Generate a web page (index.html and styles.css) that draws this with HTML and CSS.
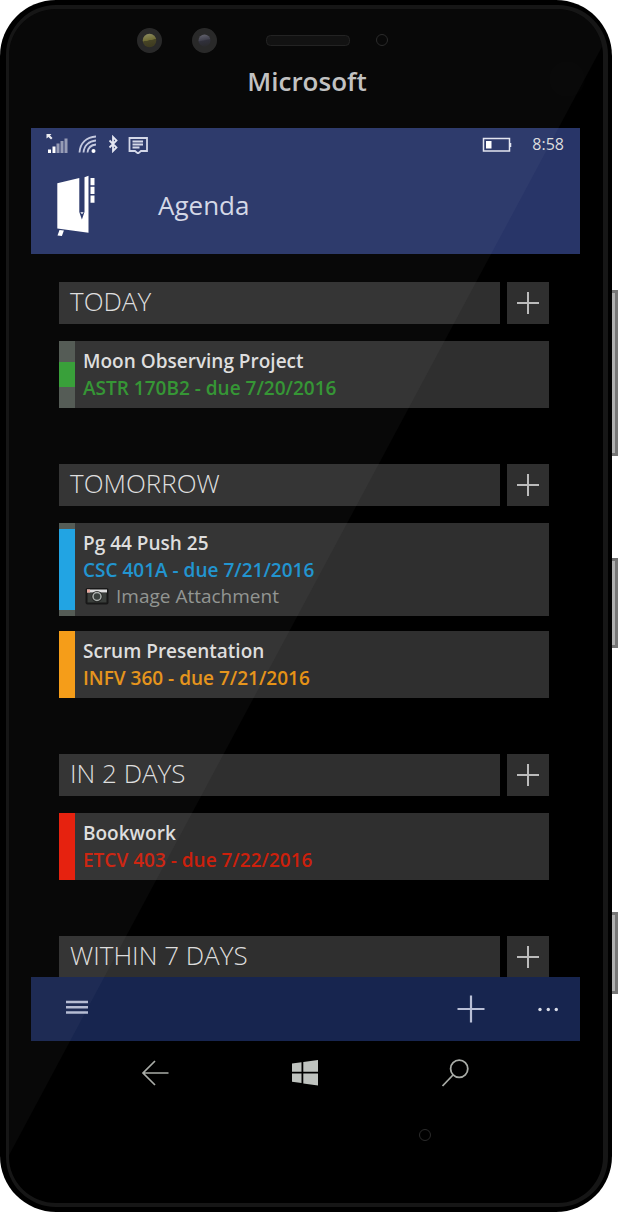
FILE: index.html
```html
<!DOCTYPE html>
<html lang="en">
<head>
<meta charset="utf-8">
<meta name="viewport" content="width=device-width, initial-scale=1">
<title>Agenda</title>
<link rel="stylesheet" href="styles.css">
</head>
<body>
<div class="device">
  <div class="phone">
    <div class="bezel">
      <div class="top">
        <svg class="sensors" width="254" height="28" viewBox="136 26 254 28" aria-hidden="true">
          <defs>
            <linearGradient id="flash" x1="0" y1="0" x2="0.2" y2="1"><stop offset="0" stop-color="#8b8a60"/><stop offset=".54" stop-color="#6a672e"/><stop offset=".58" stop-color="#413e1f"/><stop offset="1" stop-color="#393619"/></linearGradient>
            <linearGradient id="lens" x1="0" y1="0" x2="0.2" y2="1"><stop offset="0" stop-color="#62626c"/><stop offset=".5" stop-color="#3d3d4a"/><stop offset=".6" stop-color="#2a2a35"/><stop offset="1" stop-color="#252529"/></linearGradient>
          </defs>
          <circle cx="149.500" cy="40.500" r="12.500" fill="#232323"/>
          <circle cx="149.500" cy="40.500" r="6.800" fill="url(#flash)"/>
          <circle cx="204.500" cy="40.500" r="12.500" fill="#232323"/>
          <circle cx="204.500" cy="40.500" r="6" fill="url(#lens)"/>
          <rect x="266.500" y="35.500" width="83" height="10" rx="4" fill="#0b0b0b" stroke="#1c1c1c"/>
          <circle cx="382" cy="40" r="5.500" fill="#010101" stroke="#242424"/>
        </svg>
        <div class="brand">Microsoft</div>
      </div>
      <main class="screen">
        <header class="header">
          <div class="status">
            <svg width="22" height="20" viewBox="46 133 22 20" fill="#fff" aria-hidden="true">
              <path d="M46.500 133h5l-1.500 1.500 2.500 2.500-1.500 1.500-2.500-2.500-2 1.500z" opacity=".9"/>
              <path d="M48 148.500h3v3.500h-3zM52.500 145.500h3v6.500h-3z"/>
              <path d="M56.500 142.500h3v9.500h-3zM60.500 140h3v12h-3zM64.500 137.500h3V152h-3z" opacity=".5"/>
            </svg>
            <svg width="20" height="20" viewBox="79 133 20 20" fill="none" stroke="#c3c8de" stroke-width="1.800" aria-hidden="true">
              <path d="M80.500 151.500C81 142 87.500 136 97 135.500M84.500 151.500C85 144.500 90 140 97 139.500M88.500 151.500C89 147 92 144 97 143.500"/>
              <circle cx="94.500" cy="150" r="2" fill="#fff" stroke="none"/>
            </svg>
            <svg width="10" height="20" viewBox="108 133 10 20" fill="none" stroke="#e4e7f2" stroke-width="1.800" aria-hidden="true"><path d="M109.500 139.500l7 7-3.500 3.500V136l3.500 3.500-7 7"/></svg>
            <svg width="22" height="20" viewBox="128 133 22 20" fill="none" stroke="#d3d7e8" stroke-width="1.800" aria-hidden="true"><path d="M129.500 137h17.500V150h-6l-3 2.500-3-2.500h-5.500z"/><path d="M132.500 140.500h10.500M132.500 143.500h10.500M132.500 146.500h7"/></svg>
            <span class="spacer"></span>
            <svg width="30" height="20" viewBox="483 134 30 20" fill="none" stroke="#e2e5f0" stroke-width="1.500" aria-hidden="true"><path d="M484.500 138.500h26v12.500h-26zM511.500 143v4"/><path d="M487 141h5.500v7.500H487z" fill="#fff" stroke="none"/></svg>
            <time class="time">8:58</time>
          </div>
          <div class="title-row">
            <svg width="38" height="62" viewBox="57 175 38 62" fill="#fff" role="img" aria-label="Planner logo">
              <path d="M57.300 183.300l22-5.200V212l2.600 7.500 2.600-7.500V177.300l4-1.500v57l-31.200-4.400z"/>
              <path d="M80.300 212.200h3.400l-1.700 2z"/>
              <path d="M90.500 178h4v7.200h-4zM90.500 186.800h4v7.200h-4zM90.500 195.500h4v7.200h-4zM59.500 230l4.400.5-2 5.500-4.400-.6z"/>
            </svg>
            <h1 class="title">Agenda</h1>
          </div>
        </header>

        <div class="list">
          <section class="group">
            <div class="group-head"><h2 class="group-title">TODAY</h2><button class="add" aria-label="Add for today"><svg width="24" height="24" viewBox="0 0 24 24"><path d="M12 1v22M1 12h22"/></svg></button></div>
            <article class="card green"><div class="strip"><span class="mark third"></span></div><div class="info"><h3 class="name">Moon Observing Project</h3><p class="due">ASTR 170B2 - due 7/20/2016</p></div></article>
          </section>
          <section class="group">
            <div class="group-head"><h2 class="group-title">TOMORROW</h2><button class="add" aria-label="Add for tomorrow"><svg width="24" height="24" viewBox="0 0 24 24"><path d="M12 1v22M1 12h22"/></svg></button></div>
            <article class="card blue"><div class="strip"><span class="mark most"></span></div><div class="info"><h3 class="name">Pg 44 Push 25</h3><p class="due">CSC 401A - due 7/21/2016</p>
              <p class="attach"><svg width="24" height="18" viewBox="0 0 24 18" aria-hidden="true"><rect x=".5" y="1" width="23" height="16.500" rx="2" fill="#111"/><rect x="2.500" y="6" width="19" height="9.500" fill="#343835"/><path d="M2 2.500h20v3H2z" fill="#ddd"/><path d="M2 2.500h3v3H2z" fill="#e9a79c"/><circle cx="12" cy="9.500" r="5.500" fill="#1b1e1c"/><circle cx="12" cy="9.500" r="4" fill="#343a37" stroke="#a8aca9" stroke-width="1.500"/></svg>Image Attachment</p></div></article>
            <article class="card orange"><div class="strip"><span class="mark full"></span></div><div class="info"><h3 class="name">Scrum Presentation</h3><p class="due">INFV 360 - due 7/21/2016</p></div></article>
          </section>
          <section class="group">
            <div class="group-head"><h2 class="group-title">IN 2 DAYS</h2><button class="add" aria-label="Add in 2 days"><svg width="24" height="24" viewBox="0 0 24 24"><path d="M12 1v22M1 12h22"/></svg></button></div>
            <article class="card red"><div class="strip"><span class="mark full"></span></div><div class="info"><h3 class="name">Bookwork</h3><p class="due">ETCV 403 - due 7/22/2016</p></div></article>
          </section>
          <section class="group">
            <div class="group-head"><h2 class="group-title">WITHIN 7 DAYS</h2><button class="add" aria-label="Add within 7 days"><svg width="24" height="24" viewBox="0 0 24 24"><path d="M12 1v22M1 12h22"/></svg></button></div>
          </section>
        </div>

        <div class="appbar">
          <button class="tool" aria-label="Menu"><svg width="22" height="20" viewBox="0 0 22 20" stroke="#b4bad2" stroke-width="2.400"><path d="M0 3h22M0 8.300h22M0 13.500h22"/></svg></button>
          <span class="spacer"></span>
          <button class="tool" aria-label="Add"><svg width="28" height="28" viewBox="0 0 28 28" stroke="#b9bfd6" stroke-width="2.200"><path d="M14 .5v27M.5 14h27"/></svg></button>
          <button class="tool" aria-label="More"><svg width="22" height="6" viewBox="0 0 22 6" fill="#d9dce8"><circle cx="2" cy="3.500" r="1.700"/><circle cx="10.300" cy="3.500" r="1.700"/><circle cx="18.300" cy="3.500" r="1.700"/></svg></button>
        </div>
      </main>
      <nav class="keys" aria-label="System">
        <button class="tool" aria-label="Back"><svg width="28" height="28" viewBox="0 0 28 28" fill="none" stroke="#a9aca7" stroke-width="1.700"><path d="M27.500 14H2M14 2L2 14l12 12"/></svg></button>
        <button class="tool" aria-label="Start"><svg width="28" height="28" viewBox="0 0 28 28" fill="#bfc3bf"><path d="M1 4.500l9.500-1.300v9.600H1zM12.300 3L27 1v11.800H12.300zM1 14.600h9.500V24L1 22.700zM12.300 14.600H27v11.800l-14.700-2z"/></svg></button>
        <button class="tool" aria-label="Search"><svg width="28" height="28" viewBox="0 0 28 28" fill="none" stroke="#a9aca7" stroke-width="1.800"><circle cx="18.200" cy="9.800" r="8.600"/><path d="M12 16L1.500 27"/></svg></button>
      </nav>
      <svg class="mic" width="12" height="12" viewBox="0 0 12 12" aria-hidden="true"><circle cx="6" cy="6" r="5.500" fill="none" stroke="#2b2b2b"/></svg>
      <div class="gloss"></div>
      <div class="spot"></div>
    </div>
  </div>
  <div class="side">
    <span class="key volume"></span>
    <span class="key power"></span>
    <span class="key camera"></span>
  </div>
</div>
</body>
</html>
```
FILE: styles.css
```css
* { box-sizing: border-box; }
body {
  margin: 0;
  background: #fff;
  color: #ddd;
  font-family: "Open Sans", "Noto Sans", sans-serif;
}
h1, h2, h3, p { margin: 0; font-weight: 400; }
svg { display: block; flex: none; }
button { border: 0; padding: 0; cursor: pointer; }

.device { display: flex; height: 100vh; }
.phone {
  flex: 1;
  min-width: 0;
  padding: 5px 4px 5px 6px;
  border-radius: 56px;
  background: #000;
}
.bezel {
  position: relative;
  display: flex;
  flex-direction: column;
  height: 100%;
  overflow: hidden;
  border: 4px solid #161616;
  border-left-width: 3px;
  border-right-width: 5px;
  border-radius: 50px;
}
.top { flex: none; height: 119px; padding-top: 17px; }
.sensors { margin-left: 127px; }
.brand {
  margin-top: 10px;
  padding-left: 2px;
  text-align: center;
  font-size: 26px;
  line-height: 34px;
  font-weight: 600;
  color: #c0c0c0;
}

.screen {
  flex: 1;
  min-height: 0;
  display: flex;
  flex-direction: column;
  margin: 0 23px 0 22px;
}
.header { flex: none; height: 126px; background: #283568; }
.status {
  display: flex;
  align-items: center;
  gap: 10px;
  height: 32px;
  padding: 0 16px 0 15px;
}
.spacer { flex: 1; }
.time { margin-left: 10px; font-size: 16px; line-height: 24px; }
.title-row { display: flex; align-items: center; gap: 63px; padding: 15px 26px 0; }
.title { padding-bottom: 2px; font-size: 26px; line-height: 36px; color: #d3d7e6; }

.list {
  flex: 1;
  min-height: 0;
  overflow-y: auto;
  scrollbar-width: none;
  padding: 28px 31px 0 28px;
}
.group { display: flex; flex-direction: column; gap: 15px; margin-bottom: 56px; }
.group:last-child { margin-bottom: 0; }
.group-head { display: flex; gap: 7px; height: 42px; margin-bottom: 2px; }
.group-title {
  flex: 1;
  padding-left: 11px;
  background: #2f2f2f;
  font-size: 26px;
  line-height: 38px;
  font-weight: 300;
}
.add { display: grid; place-items: center; width: 42px; background: #2f2f2f; }
.add svg { stroke: #bbb; stroke-width: 2; }

.card { display: flex; background: #2f2f2f; }
.strip { display: flex; align-items: center; width: 16px; background: #505751; }
.mark { width: 100%; background: currentColor; }
.third { height: 36%; }
.most { height: 88%; }
.full { height: 100%; }
.info { padding: 7px 8px; }
.name { font-size: 19px; line-height: 27px; font-weight: 600; color: #ddd; }
.due { font-size: 19px; line-height: 26px; font-weight: 600; }
.attach { display: flex; align-items: center; gap: 7px; padding-left: 2px; font-size: 19px; line-height: 26px; color: #8f938f; }
.green { color: #339d34; }
.blue { color: #1ba2e3; }
.orange { color: #f59a12; }
.red { color: #e61b08; }
.green .due { color: #30932f; }
.blue .due { color: #1b92cf; }
.orange .due { color: #e59216; }
.red .due { color: #cc200c; }

.tool { display: grid; place-items: center; background: none; }
.appbar {
  flex: none;
  display: flex;
  align-items: center;
  height: 64px;
  padding: 0 20px 0 35px;
  gap: 53px;
  background: #17254f;
}
.keys {
  flex: none;
  display: flex;
  justify-content: space-between;
  width: 328px;
  height: 64px;
  margin-left: 132px;
}
.mic { margin: 24px 0 62px 410px; }
.gloss {
  position: absolute;
  inset: 0;
  background: rgba(255, 255, 255, .033);
  clip-path: polygon(0 0, 100% 0, 100% 3%, 0 96%);
  pointer-events: none;
}
.spot {
  position: absolute;
  top: 52px;
  right: 18px;
  width: 36px;
  height: 36px;
  border-radius: 50%;
  background: rgba(255, 255, 255, .008);
}

.side { display: flex; flex-direction: column; width: 6px; padding-top: 290px; }
.key { border: 3px solid #777; border-left: 0; background: #b0b0b0; }
.volume { height: 166px; margin-bottom: 102px; }
.power { height: 90px; margin-bottom: 264px; }
.camera { height: 82px; }
```
